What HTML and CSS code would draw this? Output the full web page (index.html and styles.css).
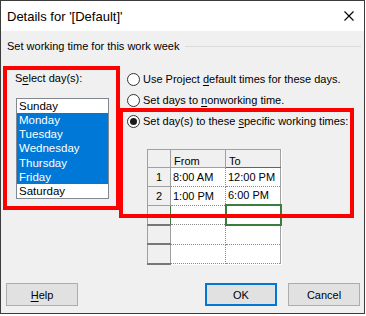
FILE: index.html
```html
<!DOCTYPE html>
<html lang="en">
<head>
  <meta charset="UTF-8">
  <title>Details for '[Default]'</title>
  <link rel="stylesheet" href="styles.css">
</head>
<body>

  <div class="window">
    <div class="titlebar">
      <span class="title">Details for '[Default]'</span>
      <svg class="close" width="10" height="10" viewBox="0 0 10 10">
        <path d="M0.5 0.5 L9.5 9.5 M9.5 0.5 L0.5 9.5" stroke="#000" stroke-width="1.1" fill="none"/>
      </svg>
    </div>

    <div class="content">
      <div class="group-head">
        <span>Set working time for this work week</span>
        <span class="rule"></span>
      </div>

      <div class="main">
        <div class="days">
          <div class="label">S<u>e</u>lect day(s):</div>
          <ul class="daylist">
            <li>Sunday</li>
            <li class="sel">Monday</li>
            <li class="sel">Tuesday</li>
            <li class="sel">Wednesday</li>
            <li class="sel">Thursday</li>
            <li class="sel">Friday</li>
            <li>Saturday</li>
          </ul>
        </div>

        <div class="options">
          <div class="radio"><span class="dot"></span><span>Use Project <u>d</u>efault times for these days.</span></div>
          <div class="radio"><span class="dot"></span><span>Set days to <u>n</u>onworking time.</span></div>
          <div class="radio"><span class="dot on"></span><span>Set day(s) to these <u>s</u>pecific working times:</span></div>

          <table class="times">
            <colgroup>
              <col class="c-num">
              <col class="c-time">
              <col class="c-time">
            </colgroup>
            <tr>
              <th class="corner"></th>
              <th>From</th>
              <th class="to">To</th>
            </tr>
            <tr>
              <td class="num">1</td>
              <td class="from">8:00 AM</td>
              <td class="until">12:00 PM</td>
            </tr>
            <tr>
              <td class="num">2</td>
              <td class="from">1:00 PM</td>
              <td class="until">6:00 PM</td>
            </tr>
            <tr class="empty active">
              <td class="num"></td>
              <td class="from"></td>
              <td class="until current"></td>
            </tr>
            <tr class="empty">
              <td class="num"></td>
              <td class="from"></td>
              <td class="until"></td>
            </tr>
            <tr class="empty">
              <td class="num"></td>
              <td class="from"></td>
              <td class="until"></td>
            </tr>
          </table>
        </div>
      </div>

      <div class="buttons">
        <button class="btn"><u>H</u>elp</button>
        <span class="spacer"></span>
        <button class="btn default">OK</button>
        <button class="btn">Cancel</button>
      </div>
    </div>

    <!-- annotation boxes drawn over the dialog -->
    <div class="mark mark-days"></div>
    <div class="mark mark-times"></div>
  </div>

</body>
</html>
```

FILE: styles.css
```css
body {
  margin: 0;
  background: #fff;
  font-family: 'Liberation Sans', Arial, sans-serif;
  font-size: 11px;
  color: #000;
}

.window {
  position: relative;
  width: 365px;
  height: 314px;
  box-sizing: border-box;
  border: 1px solid #3c3c3c;
  background: #f0f0f0;
  display: flex;
  flex-direction: column;
}

.titlebar {
  height: 30px;
  background: #fff;
  display: flex;
  align-items: center;
  padding: 0 10px 0 6px;
}

.title {
  flex: 1;
  font-size: 13px;
}

.close {
  display: block;
}

.content {
  flex: 1;
  display: flex;
  flex-direction: column;
  padding: 7px 4px 7px 5px;
}

.group-head {
  display: flex;
  align-items: center;
  height: 16px;
  padding-left: 1px;
  white-space: nowrap;
}

.group-head .rule {
  flex: 1;
  height: 1px;
  background: #dcdcdc;
  margin-left: 6px;
  margin-right: -1px;
}

.main {
  display: flex;
}

.days {
  width: 105px;
  margin-left: 9px;
  padding-top: 16px;
}

.label {
  height: 16px;
  line-height: 16px;
}

u {
  text-decoration-thickness: 1px;
  text-underline-offset: 2px;
}

.daylist {
  list-style: none;
  margin: 12px 0 0 1px;
  padding: 0;
  width: 93px;
  box-sizing: border-box;
  border: 1px solid #828790;
  background: #fff;
}

.daylist li {
  height: 14.15px;
  line-height: 14px;
  padding-left: 2px;
  font-size: 11.5px;
}

.daylist li.sel {
  background: #0078d7;
  color: #fff;
}

.options {
  flex: 1;
  padding-top: 14.5px;
}

.radio {
  height: 21px;
  display: flex;
  align-items: center;
  padding-left: 7px;
  white-space: nowrap;
}

.dot {
  width: 13px;
  height: 13px;
  box-sizing: border-box;
  border: 1px solid #333;
  border-radius: 50%;
  background: #fff;
  margin-right: 3px;
  display: flex;
  align-items: center;
  justify-content: center;
}

.dot.on::after {
  content: '';
  width: 7px;
  height: 7px;
  border-radius: 50%;
  background: #1a1a1a;
}

.times {
  margin: 17.5px 0 0 27px;
  border-collapse: collapse;
  table-layout: fixed;
  width: 133px;
  background: #fff;
}

.c-num { width: 23px; }
.c-time { width: 55px; }

.times th,
.times td {
  padding: 0 0 0 3px;
  font-weight: normal;
  text-align: left;
  white-space: nowrap;
  overflow: hidden;
}

.times th {
  height: 17px;
  vertical-align: bottom;
  background: #f0f0f0;
  border: 1px solid #a0a0a0;
  padding-bottom: 0;
}

.times th.to {
  border-bottom: 1px solid #3b7d3b;
}

.times td {
  height: 17.6px;
  border-bottom: 1px dotted #8a8a8a;
}

.times td.num {
  background: #f0f0f0;
  border: 1px solid #a0a0a0;
  text-align: center;
  padding: 0;
}

.times td.from {
  padding-left: 2px;
  border-right: 1px dotted #8a8a8a;
}

.times td.until {
  padding-left: 2px;
  border-right: 1px solid #a0a0a0;
}

.times tr.empty td.num {
  border-bottom: 2px solid #777;
}

.times tr.active td.num {
  border-right: 1px solid #3b7d3b;
}

.times td.current {
  border: 2px solid #3b7d3b;
}

.buttons {
  margin-top: auto;
  display: flex;
  gap: 11px;
}

.spacer {
  flex: 1;
}

.btn {
  width: 72px;
  height: 23px;
  box-sizing: border-box;
  border: 1px solid #adadad;
  background: #e1e1e1;
  font-family: inherit;
  font-size: 11px;
  color: #000;
  padding: 0;
}

.btn.default {
  border: 2px solid #0078d7;
}

.mark {
  position: absolute;
  border: 4px solid #ff0000;
  box-sizing: border-box;
}

.mark-days {
  left: 2px;
  top: 65px;
  width: 117px;
  height: 144px;
}

.mark-times {
  left: 118px;
  top: 107px;
  width: 235px;
  height: 110px;
}
```
